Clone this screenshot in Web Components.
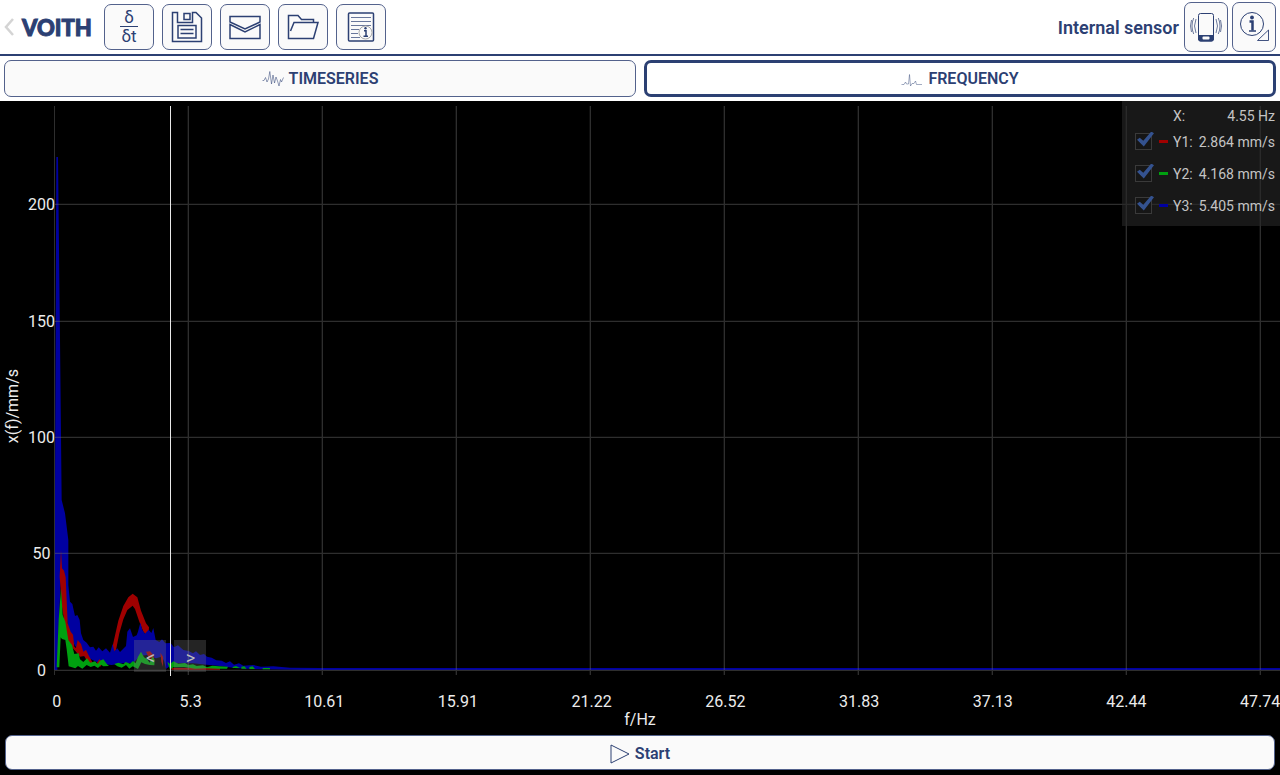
<!DOCTYPE html>
<html lang="en">
<head>
<meta charset="utf-8">
<meta name="viewport" content="width=device-width, initial-scale=1">
<title>VOITH – Frequency</title>
<style>
  html, body { margin: 0; height: 100%; }
  body {
    --navy: #2c4073;
    --outline: #53628c;
    --panel: #fafafa;
    background: #000;
    color: var(--navy);
    font-family: Roboto, "Liberation Sans", sans-serif;
  }
</style>
</head>
<body>
<vibration-app></vibration-app>

<script>
const define = (name, html, setup) => {
  const template = document.createElement('template');
  template.innerHTML = html;
  customElements.define(name, class extends HTMLElement {
    connectedCallback() {
      if (this.shadowRoot) return;
      const root = this.attachShadow({ mode: 'open' });
      root.append(template.content.cloneNode(true));
      if (setup) setup(this, root);
    }
  });
};

const icons = {
  save: `<svg width="32" height="32" viewBox="0 0 32 32"><path d="M1.500 1.500H6.500V11.500H21.500V1.500H25L30.500 7V30.500H1.500Z M13 2.500h6v6h-6Z M7 14.500h18v12.500H7Z M9.500 18.500h13 M9.500 22.500h13" fill="none" stroke="currentColor" stroke-width="1.500"/></svg>`,
  mail: `<svg width="32" height="26" viewBox="0 0 32 26"><path d="M1 2.500H31V8L16 15L1 8Z M1 10.500L16 18L31 10.500V24.500H1Z" fill="none" stroke="currentColor" stroke-width="1.500"/></svg>`,
  folder: `<svg width="32" height="26" viewBox="0 0 32 26"><path d="M26.500 8V5.500H14.500L11 1.500H1.500V24.500H26.500L31 8.500H7L3.500 17" fill="none" stroke="currentColor" stroke-width="1.500"/></svg>`,
  report: `<svg width="28" height="32" viewBox="0 0 28 32"><rect x="1.500" y="2" width="25" height="28" rx="1" fill="none" stroke="currentColor" stroke-width="1.500"/><path d="M4 6.500H24M4 10.500H24M4 14.500H24M4 18.500H12M4 22.500H11M4 26.500H13" stroke="currentColor" opacity=".7"/><circle cx="18.500" cy="21.500" r="6.500" fill="#fafafa" stroke="#aaa"/><path d="M17 19.800h2v5.200M16.500 25.200h4.500" fill="none" stroke="currentColor" stroke-width="1.500"/><circle cx="18.500" cy="17.200" r="1.200" fill="currentColor"/></svg>`,
  phone: `<svg width="32" height="32" viewBox="0 0 32 32" fill="none" stroke="currentColor"><rect x="8.500" y="2.500" width="15" height="27.500" rx="2"/><path d="M8.500 24.500h15v3.500a2 2 0 0 1-2 2h-11a2 2 0 0 1-2-2Z" fill="currentColor"/><rect x="12.500" y="25.500" width="7" height="3" rx="1" fill="#fafafa" stroke="none"/><path d="M6 8Q3 15 6 22M3.700 7Q.3 15 3.700 23M1.500 9Q-.5 15 1.500 21M26 8Q29 15 26 22M28.300 7Q31.700 15 28.300 23M30.500 9Q32.500 15 30.500 21" stroke-width=".7"/></svg>`,
  info: `<svg width="32" height="32" viewBox="0 0 32 32" fill="none" stroke="currentColor"><circle cx="14" cy="13" r="11.500"/><path d="M11.500 10.500H14.500V19.500" stroke-width="2.500"/><path d="M11 20h7" stroke-width="1.500"/><circle cx="14" cy="6.500" r="1.900" fill="currentColor" stroke="none"/><path d="M19.500 29.500H30.500V19Z" stroke-width=".9"/></svg>`,
  wave: `<svg width="22" height="18" viewBox="0 0 22 18"><path d="M.5 10.500H2L3.500 7.500L5 12L6.500 9L7.800 1.500L9.500 14L11 5L12.500 13L14 7L15.500 11L17 16L18.500 9.500L19.500 12L21.500 7.500" fill="none" stroke="currentColor" stroke-width=".8" opacity=".65"/></svg>`,
  peak: `<svg width="22" height="18" viewBox="0 0 22 18"><path d="M.5 14.500H3L4.500 12L5.500 14H7.500L8.500 4.500L9.500 16L11 13.500H13L14.500 11L15.500 14.500H21" fill="none" stroke="currentColor" stroke-width=".8" opacity=".55"/></svg>`,
  play: `<svg width="20" height="20" viewBox="0 0 20 20"><path d="M1 1V19L19 10Z" fill="none" stroke="currentColor"/></svg>`
};

define('app-icon', `
  <style>
    :host { display: block; line-height: 0; }
    svg { display: block; }
  </style>`, (host, root) => {
  root.append(document.createRange().createContextualFragment(icons[host.getAttribute('name')]));
});

define('tool-button', `
  <style>
    :host { display: block; width: 50px; height: 46px; }
    :host([tall]) { width: 44px; height: 50px; }
    button {
      box-sizing: border-box; width: 100%; height: 100%; padding: 0;
      display: flex; align-items: center; justify-content: center;
      font: inherit; color: var(--navy); background: var(--panel);
      border: 1px solid var(--outline); border-radius: 7px;
    }
  </style>
  <button type="button"><slot></slot></button>`, (host, root) => {
  root.querySelector('button').setAttribute('aria-label', host.getAttribute('label'));
});

define('derivative-mark', `
  <style>
    :host { display: block; font-size: 17px; line-height: 17px; text-align: center; }
    .top { display: block; border-bottom: 1px solid currentColor; }
    .bottom { display: block; padding: 1px 1px 0; }
  </style>
  <span class="top">δ</span><span class="bottom">δt</span>`);

define('app-header', `
  <style>
    :host {
      display: flex; align-items: center; box-sizing: border-box; min-height: 56px;
      padding: 0 4px; background: #fff; border-bottom: 2px solid var(--navy);
    }
    .back { display: block; width: 18px; color: #d4d4d4; }
    .back svg { display: block; }
    .logo { font: 900 22px/26px Lato, Roboto, sans-serif; width: 82px; padding-top: 2px; -webkit-text-stroke: 1px currentColor; }
    nav { display: flex; gap: 8px; flex: 1; }
    .sensor { font-size: 18px; line-height: 22px; font-weight: 600; padding: 2px 5px 0 0; }
    .right { display: flex; gap: 4px; }
  </style>
  <a class="back" href="#back" aria-label="Back"><svg width="10" height="20" viewBox="0 0 10 20"><path d="M9 2L2 10L9 18" fill="none" stroke="currentColor" stroke-width="2.500"/></svg></a>
  <span class="logo">VOITH</span>
  <nav>
    <tool-button label="Derivative"><derivative-mark></derivative-mark></tool-button>
    <tool-button label="Save"><app-icon name="save"></app-icon></tool-button>
    <tool-button label="Mail"><app-icon name="mail"></app-icon></tool-button>
    <tool-button label="Open"><app-icon name="folder"></app-icon></tool-button>
    <tool-button label="Report"><app-icon name="report"></app-icon></tool-button>
  </nav>
  <span class="sensor">Internal sensor</span>
  <div class="right">
    <tool-button tall label="Device"><app-icon name="phone"></app-icon></tool-button>
    <tool-button tall label="Information"><app-icon name="info"></app-icon></tool-button>
  </div>`);

define('view-tab', `
  <style>
    :host { display: block; flex: 1; }
    button {
      box-sizing: border-box; width: 100%; height: 37px; padding: 0;
      display: flex; align-items: center; justify-content: center; gap: 5px;
      font: 600 16px/20px Roboto, sans-serif; color: var(--navy); background: var(--panel);
      border: 1px solid var(--outline); border-radius: 7px;
    }
    :host([selected]) button { background: #fff; border: 3px solid var(--navy); }
  </style>
  <button type="button"><slot name="icon"></slot><slot></slot></button>`, (host, root) => {
  root.querySelector('button').setAttribute('aria-pressed', host.hasAttribute('selected'));
});

define('view-tabs', `
  <style>
    :host { display: flex; gap: 8px; padding: 4px; background: #fff; }
  </style>
  <view-tab><app-icon slot="icon" name="wave"></app-icon>TIMESERIES</view-tab>
  <view-tab selected><app-icon slot="icon" name="peak"></app-icon>FREQUENCY</view-tab>`);

define('legend-row', `
  <style>
    :host { display: block; }
    label { display: flex; align-items: center; height: 32px; }
    input {
      appearance: none; box-sizing: border-box; width: 17px; height: 17px; margin: 0 7px 2px 0;
      border: 1px solid #3a3a3a; position: relative; background: #161616;
    }
    input:checked::before {
      content: ""; position: absolute; left: 1px; top: -2px; width: 17px; height: 15px;
      background: #34528f;
      clip-path: polygon(0 55%, 16% 42%, 37% 62%, 84% 0, 100% 12%, 40% 100%);
    }
    .key { width: 9px; height: 3px; margin: 0 5px 2px 0; background: var(--series); }
    .value { flex: 1; text-align: right; }
  </style>
  <label><input type="checkbox" checked><span class="key"></span><span class="name"></span><span class="value"></span></label>`, (host, root) => {
  root.querySelector('.name').textContent = host.getAttribute('name');
  root.querySelector('.value').textContent = host.getAttribute('value');
});

define('chart-legend', `
  <style>
    :host {
      display: block; box-sizing: border-box; width: 158px; padding: 5px 5px 4px 13px;
      background: rgba(40, 40, 40, .6); color: #c4c4c4; font-size: 14px;
    }
    .x { display: flex; justify-content: space-between; padding-left: 38px; line-height: 20px; }
  </style>
  <div class="x"><span>X:</span><span>4.55 Hz</span></div>
  <legend-row name="Y1:" value="2.864 mm/s" style="--series:#a00000"></legend-row>
  <legend-row name="Y2:" value="4.168 mm/s" style="--series:#00a010"></legend-row>
  <legend-row name="Y3:" value="5.405 mm/s" style="--series:#0000a0"></legend-row>`);

define('chart-cursor', `
  <style>
    :host { display: flex; gap: 8px; align-items: flex-end; transform: translateX(-50%); height: 100%; padding-bottom: 4px; box-sizing: border-box; }
    .line { position: absolute; left: 50%; top: 0; bottom: 0; width: 1px; background: #e8e8e8; }
    button {
      width: 32px; height: 32px; padding: 3px 0 0; border: 0; background: rgba(130, 130, 130, .28);
      color: #bbb; font: 18px/20px Roboto, sans-serif;
    }
  </style>
  <span class="line"></span>
  <button type="button" aria-label="Previous line">&lt;</button>
  <button type="button" aria-label="Next line">&gt;</button>`);

/* Three units of the drawing make one unit of the plot's nominal 1226 x 570 area. */
define('spectrum-plot', `
  <style>
    :host { display: block; position: relative; min-width: 0; min-height: 0; }
    svg { position: absolute; inset: 0; width: 100%; height: 100%; display: block; }
    chart-cursor { position: absolute; left: 9.5%; top: 0; }
  </style>
  <svg viewBox="162 318 3678 1710" preserveAspectRatio="none" aria-hidden="true">
    <g transform="translate(120 1620)">
      <path fill="#a00000" d="M213 340L222 300L235 242L250 198L265 172L278 161L292 172L303 212L318 250L327 262L325 292L310 275L298 245L285 207L278 197L262 210L250 238L238 280L228 330L215 345Z"/>
      <path fill="#0000a0" d="M43 390L49-1149L54-1149L60-600L65-120L75-80L85 0V135L90 185L97 192L105 228L112 225L119 240L123 280L130 300L140 308L150 322L160 320L168 332L176 322L187 334L198 325L210 338L218 312L223 334L232 325L240 336L258 318L262 275L270 265L279 291L290 286L294 275L301 248L307 270L315 281L326 269L334 279L340 264L347 300L358 306L366 298L376 310L392 309L402 322L414 316L430 330L446 333L459 340L468 334L480 345L492 342L501 350L515 353L529 361L545 362L558 369L570 364L582 374L597 370L610 377L640 375L663 380L700 379L750 383L840 384L3720 384V390L800 390L640 387L590 385L540 378L500 374L460 370L400 370L378 387L372 362L365 350L348 355L320 345L300 348L280 368L250 370L215 375L190 372L170 366L150 356L130 348L120 330L105 318L95 294L85 270L75 190L68 110L64 80L57 240L52 390Z"/>
      <path fill="#a00000" d="M59 110L63 30L66 85L72 92L77 112L83 250L92 275L99 284L103 320L108 324L113 300L123 312L130 335L138 330L148 350L158 368L145 372L133 348L120 350L108 335L92 318L80 290L66 200ZM318 335L330 334L340 345L344 362L325 350ZM361 338L369 350V380L364 365ZM170 370L178 358L190 368L180 381ZM395 384L540 383V389H395Z"/>
      <path fill="#00a010" d="M50 382L56 240L63 145L68 225L76 245L85 300L96 315L103 342L116 340L120 358L130 366L141 355L151 368L165 364L173 372L180 362L190 358L201 373L207 378L190 379L183 374L174 384L163 377L152 381L140 375L127 386L114 378L106 385L86 379L80 328L76 300L66 297L62 292L58 382ZM223 372L235 368L250 373L257 366L270 371L279 363L287 370L294 350L303 335L312 352L321 357L329 368L338 349L344 361L343 376L330 375L315 372L304 367L294 387L278 379L268 386L258 375L245 383L232 379ZM382 365L390 372L400 364L415 371L435 369L445 375L459 373L470 378L489 376L501 382L517 377L537 379L564 380L561 386L535 386L500 385L465 386L432 381L400 382L390 389ZM578 381L588 378L600 384H578ZM604 380L613 379L620 386H604ZM628 381L638 379L645 387H628ZM668 384H690V388H668Z"/>
    </g>
    <g class="grid" stroke="#6e6e6e" stroke-opacity=".42" fill="none"></g>
  </svg>
  <chart-cursor></chart-cursor>`, (host, root) => {
  const columns = [54, 188, 322, 456, 590, 724, 858, 992, 1126, 1260];
  const rows = [204, 321, 437, 553, 670];
  const path = document.createElementNS('http://www.w3.org/2000/svg', 'path');
  path.setAttribute('d',
    columns.map(x => `M${x * 3 + 1} 318V2025`).join('') +
    rows.map(y => `M162 ${y * 3 + 1}H3840`).join(''));
  path.setAttribute('stroke-width', '4');
  root.querySelector('.grid').append(path);
});

define('spectrum-chart', `
  <style>
    :host {
      display: grid; position: relative; flex: 1; min-height: 300px; overflow: hidden; box-sizing: border-box;
      grid-template: 1fr 35px 18px / 26px 28px 1fr; padding: 5px 0 6px;
      color: #ececec; font-size: 16px; line-height: 18px;
    }
    .y-title { align-self: center; justify-self: start; writing-mode: vertical-rl; rotate: 180deg; padding: 0 0 30px 0; margin-left: 4px; }
    .y-ticks, .x-ticks { display: grid; list-style: none; margin: 0; padding: 0; text-align: center; }
    .y-ticks { grid-auto-rows: 1fr; align-items: center; justify-items: center; margin: 41px -3px -53px 0; }
    .x-ticks { grid-column: 1 / -1; grid-auto-flow: column; grid-auto-columns: 1fr; align-items: end; margin: 0 -47px 0 -10px; }
    .x-title { grid-column: 1 / -1; text-align: center; }
    chart-legend { position: absolute; top: 0; right: 0; }
  </style>
  <span class="y-title">x(f)/mm/s</span>
  <ul class="y-ticks"><li>200</li><li>150</li><li>100</li><li>50</li><li>0</li></ul>
  <spectrum-plot></spectrum-plot>
  <ul class="x-ticks"><li>0</li><li>5.3</li><li>10.61</li><li>15.91</li><li>21.22</li><li>26.52</li><li>31.83</li><li>37.13</li><li>42.44</li><li>47.74</li></ul>
  <span class="x-title">f/Hz</span>
  <chart-legend></chart-legend>`);

define('start-bar', `
  <style>
    :host { display: block; padding: 0 5px 5px; }
    button {
      box-sizing: border-box; width: 100%; height: 35px; padding: 2px 0 0;
      display: flex; align-items: center; justify-content: center; gap: 5px;
      font: 600 16px/20px Roboto, sans-serif; color: var(--navy); background: var(--panel);
      border: 1px solid var(--outline); border-radius: 7px;
    }
  </style>
  <button type="button"><app-icon name="play"></app-icon>Start</button>`);

define('vibration-app', `
  <style>
    :host { display: flex; flex-direction: column; min-height: 100vh; }
  </style>
  <app-header></app-header>
  <view-tabs></view-tabs>
  <spectrum-chart></spectrum-chart>
  <start-bar></start-bar>`);
</script>
</body>
</html>
